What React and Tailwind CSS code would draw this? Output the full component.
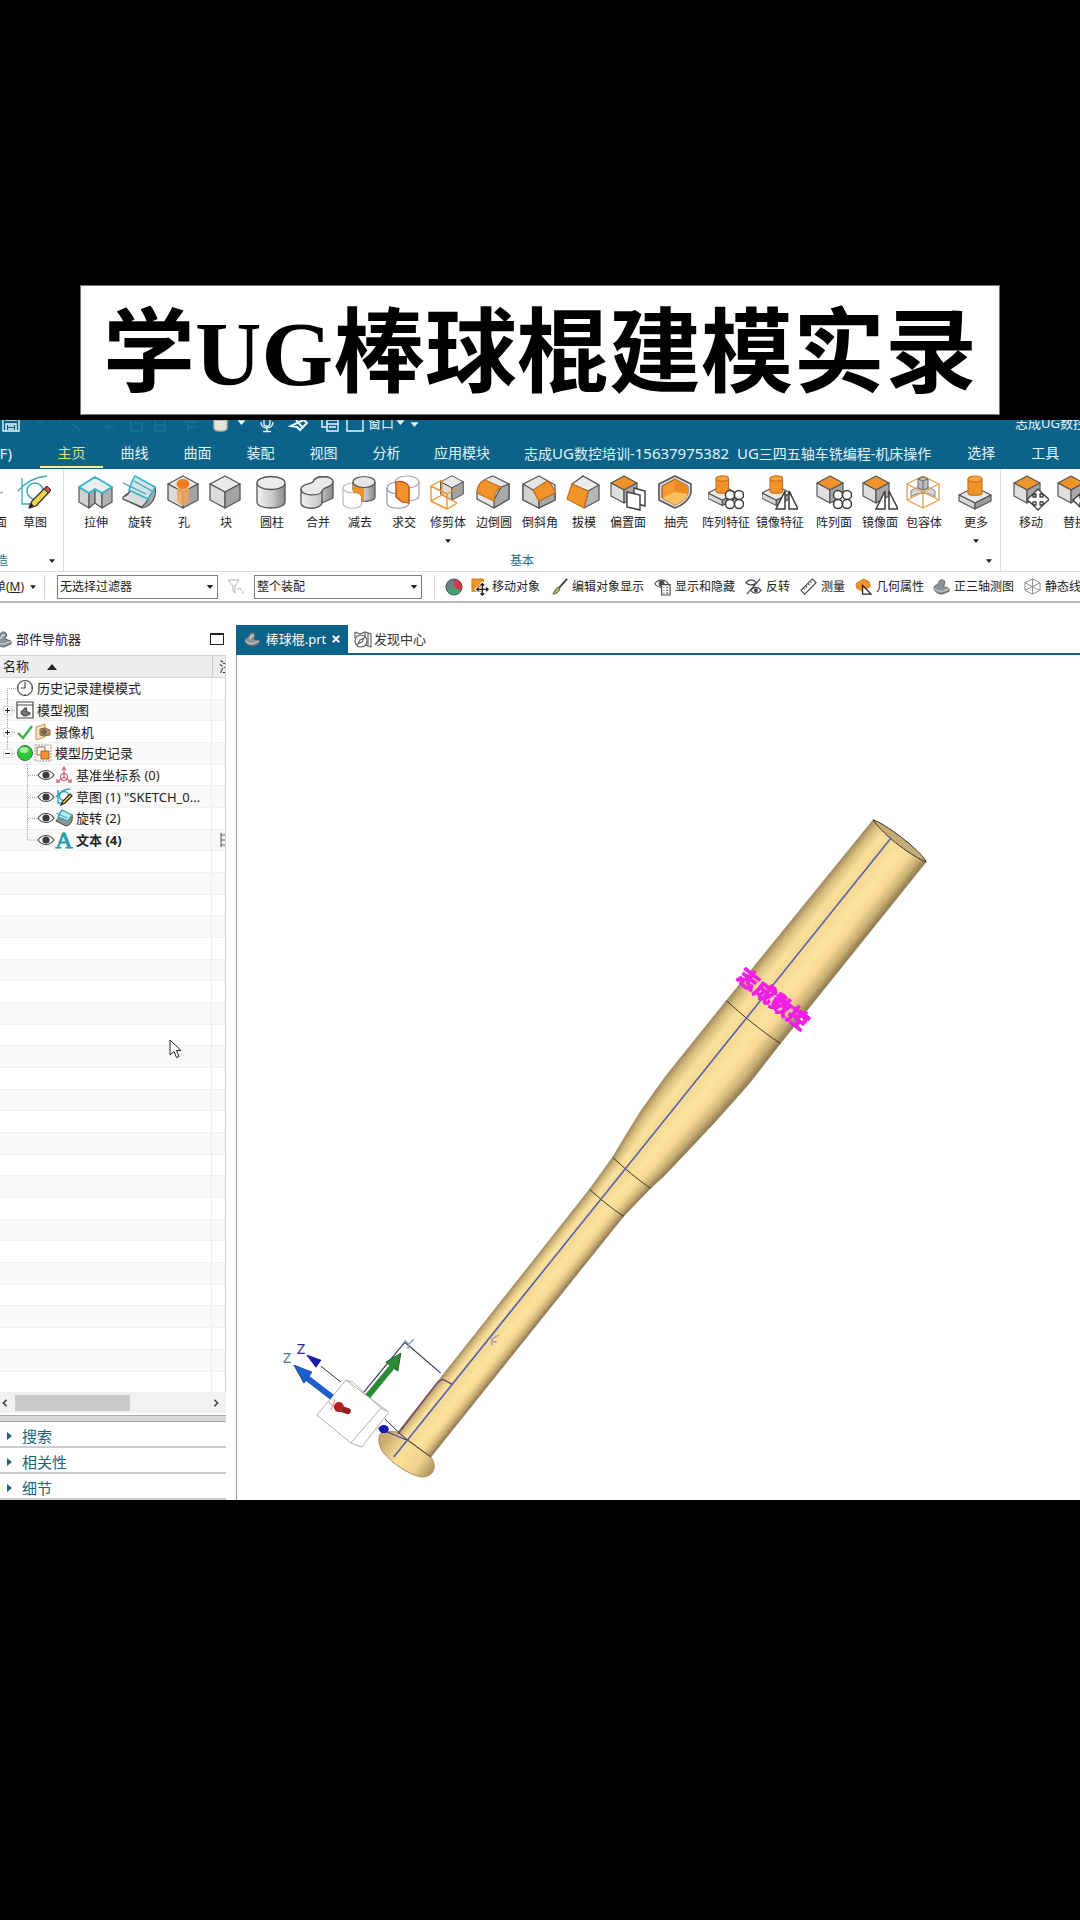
import React from "react";

const ORANGE = "#f0932b";
const EDGE = "#555555";

/* ---------- solid bodies used by the ribbon icons (34 x 34) ---------- */

const Cube = ({ top = "#e9e9e9", left = "#dcdcdc", right = "#a3a3a3", stroke = EDGE }) => (
  <g stroke={stroke} strokeWidth="1.3" strokeLinejoin="round">
    <path d="M17 1 32 9 17 17 2 9Z" fill={top} />
    <path d="M2 9 17 17V33L2 25Z" fill={left} />
    <path d="M32 9 17 17V33L32 25Z" fill={right} />
  </g>
);

const SmallCube = () => (
  <g stroke={EDGE} strokeWidth="1.2" strokeLinejoin="round">
    <path d="M14 1 27 8 14 15 1 8Z" fill={ORANGE} />
    <path d="M1 8 14 15V28L1 21Z" fill="#dedede" />
    <path d="M27 8 14 15V28L27 21Z" fill="#a8a8a8" />
  </g>
);

const Boss = () => (
  <g stroke={EDGE} strokeWidth="1.2" strokeLinejoin="round">
    <path d="M17 12 33 20 17 28 1 20Z" fill="#e8e8e8" />
    <path d="M1 20 17 28V34L1 26Z" fill="#d5d5d5" />
    <path d="M33 20 17 28V34L33 26Z" fill="#9c9c9c" />
    <path d="M10 4V18C10 21 24 21 24 18V4" fill={ORANGE} stroke="#c8701a" />
    <ellipse cx="17" cy="4" rx="7" ry="3" fill="#f7a440" stroke="#c8701a" />
  </g>
);

const FourCircles = () => (
  <g fill="#fff" stroke="#3c3c3c" strokeWidth="1.5">
    <circle cx="22" cy="20" r="4.5" />
    <circle cx="31" cy="20" r="4.5" />
    <circle cx="22" cy="29" r="4.5" />
    <circle cx="31" cy="29" r="4.5" />
  </g>
);

const MirrorMark = () => (
  <g fill="#fff" stroke="#3c3c3c" strokeWidth="1.5">
    <path d="M23 16V34H14Z" />
    <path d="M27 16V34H36Z" />
  </g>
);

const MoveMark = () => (
  <path
    d="M25 14 30 19H27V22H30V19L36 24.500 30 30V27H27V30H30L25 35 20 30H23V27H20V30L14 24.500 20 19V22H23V19H20Z"
    fill="#fff"
    stroke="#3c3c3c"
    strokeWidth="1.3"
    strokeLinejoin="round"
  />
);

const shapes = {
  sketch: (
    <g fill="none" strokeLinejoin="round">
      <path d="M1 16C8 8 18 2 30 1M5 3V29H16" stroke="#3aa6b4" strokeWidth="1.3" />
      <circle cx="18" cy="16" r="8" stroke="#3aa6b4" strokeWidth="1.5" />
      <path d="M12 33 15 26 29 12 33 16 19 31Z" fill="#f2d24b" stroke="#333" strokeWidth="1.3" />
      <path d="M27 14 30 11 34 15 31 18Z" fill="#c94a4a" stroke="#333" />
      <path d="M12 33 14 28 17 31Z" fill="#222" />
    </g>
  ),
  extrude: (
    <g strokeLinejoin="round" stroke={EDGE} strokeWidth="1.2">
      <path d="M1 12 11 18V33L1 27Z" fill="#d2d2d2" />
      <path d="M11 18 17 14V28L11 33Z" fill="#a8a8a8" />
      <path d="M17 14 24 18V33L17 28Z" fill="#d8d8d8" />
      <path d="M24 18 34 12V27L24 33Z" fill="#b0b0b0" />
      <path d="M17 2 34 12 24 18 17 14 11 18 1 12Z" fill="#e6eeee" stroke="#35b5c9" strokeWidth="1.8" />
    </g>
  ),
  revolve: (
    <g strokeLinejoin="round" stroke={EDGE} strokeWidth="1.2">
      <path d="M20 33 1 24C1 20 5 20 7 17L27 22 33 12C35 22 30 31 20 33Z" fill="#a6a9aa" />
      <path d="M1 22C6 21 7 18 8 15L26 24C25 28 22 29 20 32L1 24Z" fill="#d9dcdc" />
      <path d="M13 1 33 12C31 17 28 20 26 24L7 15C9 10 10 5 13 1Z" fill="#cfe3e8" stroke="#35b5c9" strokeWidth="1.6" />
      <path d="M1 8 24 19M12 6 30 16" fill="none" stroke="#3a9fb8" />
    </g>
  ),
  hole: (
    <g>
      <Cube />
      <path d="M11 13V27L17 31 23 27V13Z" fill="#f2a65a" opacity=".85" />
      <ellipse cx="17" cy="9" rx="6.500" ry="5" fill="#f07c1c" />
    </g>
  ),
  block: <Cube />,
  cylinder: (
    <g stroke={EDGE} strokeWidth="1.3">
      <path d="M3 8V27C3 35 31 35 31 27V8" fill="url(#steel)" />
      <ellipse cx="17" cy="8" rx="14" ry="6.500" fill="#ececec" />
    </g>
  ),
  unite: (
    <g stroke={EDGE} strokeWidth="1.3" strokeLinejoin="round">
      <path d="M1 14V28C1 35 21 35 22 28L33 23V7C31 0 15 0 13 7Z" fill="url(#steel)" />
      <path d="M13 7C15 0 33 0 33 7 33 12 23 12 22 16 20 22 1 21 1 14 1 9 11 9 13 7Z" fill="#e9e9e9" />
      <path d="M22 16V28" fill="none" />
    </g>
  ),
  subtract: (
    <g strokeWidth="1.2">
      <path d="M1 14V28C1 35 20 35 20 28V14" fill="#fff" stroke="#b8b8b8" />
      <ellipse cx="11" cy="13" rx="10" ry="5" fill="#fff" stroke="#b8b8b8" />
      <path d="M11 7V15C18 15 20 19 20 26 27 27 33 25 33 22V7" fill="url(#steel)" stroke={EDGE} />
      <path d="M11 8C11 12 18 13 22 13V26H20C20 20 17 18 11 18Z" fill={ORANGE} />
      <ellipse cx="22" cy="7" rx="11" ry="5.500" fill="#e6e6e6" stroke={EDGE} />
    </g>
  ),
  intersect: (
    <g fill="none" strokeWidth="1.2">
      <path d="M1 13V28C1 35 23 35 23 28V13" stroke="#8f98b8" />
      <ellipse cx="12" cy="13" rx="11" ry="6" stroke="#8f98b8" />
      <path d="M10 7V21C12 28 33 27 33 21V7" stroke="#aaaaaa" />
      <ellipse cx="21" cy="7" rx="12" ry="6" stroke="#aaaaaa" />
      <path d="M10 7C17 5 23 9 23 13V28L16 27 10 22Z" fill={ORANGE} stroke="#c2461a" />
    </g>
  ),
  trim: (
    <g fill="none" strokeLinejoin="round">
      <g transform="translate(9 0) scale(.76)"><Cube /></g>
      <path d="M1 11 17 19 17 34 1 26ZM1 11 12 5M17 19 27 13M17 34 27 28M1 26 12 20 27 28M12 20V5" stroke={ORANGE} strokeWidth="1.4" />
    </g>
  ),
  edgeBlend: (
    <g stroke={EDGE} strokeWidth="1.3" strokeLinejoin="round">
      <path d="M17 1 33 9V24L18 33 1 24V17C2 8 8 4 17 1Z" fill="#e6e6e6" />
      <path d="M18 33V25L25 12 33 9V24Z" fill="#a8a8a8" />
      <path d="M9 5 25 12C20 15 18 20 18 26L1 18C1 12 4 7 9 5Z" fill={ORANGE} stroke="#c8701a" />
    </g>
  ),
  chamfer: (
    <g stroke={EDGE} strokeWidth="1.3" strokeLinejoin="round">
      <path d="M17 1 33 10V25L17 33 1 25V9Z" fill="#e6e6e6" />
      <path d="M1 9 11 15 17 25V33L1 25Z" fill="#d2d2d2" />
      <path d="M17 26 33 18V25L17 33Z" fill="#a8a8a8" />
      <path d="M11 15 25 6C30 9 32 14 33 18L17 26Z" fill={ORANGE} stroke="#c8701a" />
    </g>
  ),
  draft: (
    <g stroke={EDGE} strokeWidth="1.3" strokeLinejoin="round">
      <path d="M17 1 33 10V25L18 33 22 17 7 10Z" fill="#b5b5b5" />
      <path d="M17 1 33 10 22 16 6 9Z" fill="#ececec" />
      <path d="M6 9 22 16 18 33 1 24Z" fill={ORANGE} stroke="#c8701a" />
    </g>
  ),
  offset: (
    <g>
      <SmallCube />
      <g fill="#fff" stroke="#3c3c3c" strokeWidth="1.4">
        <path d="M24 13 35 16V31L24 28Z" />
        <path d="M17 17 30 20V35L17 32Z" />
      </g>
    </g>
  ),
  shell: (
    <g strokeLinejoin="round">
      <path d="M17 1 33 9V18C31 25 25 30 17 33L1 25V9Z" fill="#dfe0e0" stroke={EDGE} strokeWidth="1.6" />
      <path d="M17 4 30 11V18C29 23 24 27 17 30L4 23V11Z" fill="#f59a35" stroke="#8c4c12" />
      <path d="M17 4V17L30 20V11Z" fill="#ee8a22" />
      <path d="M17 17 4 23 17 30C22 28 28 24 30 19Z" fill="#fbc15e" />
    </g>
  ),
  patternFeature: (<g><g transform="translate(-1 0) scale(.9)"><Boss /></g><FourCircles /></g>),
  mirrorFeature: (<g><g transform="translate(-1 0) scale(.9)"><Boss /></g><MirrorMark /></g>),
  patternFace: (<g><SmallCube /><FourCircles /></g>),
  mirrorFace: (<g><SmallCube /><MirrorMark /></g>),
  bounding: (
    <g fill="none" strokeLinejoin="round">
      <path d="M5 16C9 11 25 11 29 16V22C25 17 9 17 5 22Z" fill="#d5d5d5" stroke="#888" />
      <path d="M17 1 33 9 33 25 17 33 1 25V9ZM1 9 17 17 33 9M17 17V33M1 25 17 17 33 25" stroke="#e0a04a" strokeWidth="1.3" />
      <path d="M12 4 17 2 22 4V13L17 15 12 13Z" fill="#bdbdbd" stroke="#666" />
      <path d="M12 4 17 6 22 4M17 6V15" stroke="#666" />
    </g>
  ),
  more: <Boss />,
  move: (<g><SmallCube /><MoveMark /></g>),
  replace: (
    <g>
      <SmallCube />
      <path d="M16 25 23 19V23H34V28H23V32Z" fill="#fff" stroke="#3c3c3c" strokeWidth="1.4" />
    </g>
  ),
};

const ribbonItems = [
  { label: "拉伸", icon: "extrude", width: "w-11" },
  { label: "旋转", icon: "revolve", width: "w-11" },
  { label: "孔", icon: "hole", width: "w-11" },
  { label: "块", icon: "block", width: "w-10" },
  { label: "圆柱", icon: "cylinder", width: "w-13" },
  { label: "合并", icon: "unite", width: "w-10" },
  { label: "减去", icon: "subtract", width: "w-11" },
  { label: "求交", icon: "intersect", width: "w-11" },
  { label: "修剪体", icon: "trim", width: "w-11", menu: true },
  { label: "边倒圆", icon: "edgeBlend", width: "w-12" },
  { label: "倒斜角", icon: "chamfer", width: "w-11" },
  { label: "拔模", icon: "draft", width: "w-11" },
  { label: "偏置面", icon: "offset", width: "w-11" },
  { label: "抽壳", icon: "shell", width: "w-13" },
  { label: "阵列特征", icon: "patternFeature", width: "w-12" },
  { label: "镜像特征", icon: "mirrorFeature", width: "w-15" },
  { label: "阵列面", icon: "patternFace", width: "w-12" },
  { label: "镜像面", icon: "mirrorFace", width: "w-11" },
  { label: "包容体", icon: "bounding", width: "w-11" },
  { label: "更多", icon: "more", width: "w-15", menu: true },
];

const Caret = ({ className = "" }) => (
  <svg viewBox="0 0 8 5" className={`h-1 w-1.5 shrink-0 ${className}`} fill="currentColor">
    <path d="M0 0H8L4 5Z" />
  </svg>
);

const RibbonButton = ({ label, icon, width, menu }) => (
  <button type="button" className={`flex shrink-0 flex-col items-center pt-1.5 ${width}`}>
    <svg viewBox="0 0 36 36" className="h-9 w-9">{shapes[icon]}</svg>
    <span className="mt-1 text-xs leading-4 whitespace-nowrap">{label}</span>
    {menu && <Caret className="mt-2" />}
  </button>
);

/* ---------- window title and menu tabs ---------- */

const QuickAccess = () => (
  <div className="flex h-[17px] items-start overflow-hidden text-[#e8f6fb]">
    <svg viewBox="0 0 430 17" className="h-[17px] w-[430px] shrink-0" fill="none" stroke="currentColor" strokeWidth="1.4">
      <path d="M3 0V11H19V0M6 11V4H16V11M8 6H14M8 9H14M5 0H17" />
      <g stroke="#2b7fa0" opacity=".6">
        <path d="M38 4 44 0M60 0V3M72 3 80 11M108 3V10M104 7H114M131 0V11H142V3H134M155 0V11H165V0M155 5H165M183 2H198M188 2V11M188 7H198" />
      </g>
      <path d="M214 0V8C214 12 227 12 227 8V0Z" fill="#e6e2dc" stroke="#b9b4ab" />
      <path d="M239 1H244L241.500 4Z" fill="currentColor" />
      <path d="M264 0V4C264 7 270 7 270 4V0M261 2C261 10 273 10 273 2M267 8V11M263 11.500H271" />
      <path d="M291 6 299 2 304 0 307 3 300 10 297 7ZM296 0 303 8" strokeWidth="2" />
      <path d="M322 0V7H327M327 0H338V11H327ZM327 4H338M329 7H336" />
      <path d="M347 0V11H363V0" />
      <path d="M398 1H403L400.500 4ZM412 3H417L414.500 6Z" fill="currentColor" />
    </svg>
    <span className="relative right-[62px] -mt-[7px] text-[13px] leading-5">窗口</span>
    <span className="-mt-[7px] -mr-8 ml-auto text-[13px] leading-5 whitespace-nowrap">志成UG数控培训</span>
  </div>
);

const tabs = ["曲线", "曲面", "装配", "视图", "分析"];

const MenuTabs = () => (
  <nav className="flex h-8 overflow-hidden text-sm leading-8 whitespace-nowrap text-[#e4f4fa]">
    <button type="button" className="flex w-10 shrink-0 justify-end pr-7">
      文件<span className="text-[15px]">(F)</span>
    </button>
    <button type="button" className="flex w-[63px] shrink-0 flex-col items-center text-[#dde08a]">
      <span className="h-[29px]">主页</span>
      <span className="h-0.5 w-full bg-[#e9efa5]" />
    </button>
    {tabs.map((tab) => (
      <button type="button" key={tab} className="w-[63px] shrink-0 text-center">{tab}</button>
    ))}
    <button type="button" className="shrink-0 px-4">应用模块</button>
    <button type="button" className="shrink-0 px-[18px]">
      志成<span className="text-[15px]">UG</span>数控培训
      <span className="text-[15px]">-15637975382{"\u00a0 "}UG</span>
      三四五轴车铣编程-机床操作
    </button>
    <button type="button" className="shrink-0 px-[18px]">选择</button>
    <button type="button" className="shrink-0 px-[18px]">工具</button>
  </nav>
);

const Ribbon = () => (
  <div className="flex h-[103px] overflow-hidden border-b border-[#dcdcdc] bg-white text-[#222]">
    <section className="flex w-16 shrink-0 flex-col border-r border-[#dcdcdc]">
      <div className="flex justify-end pr-1.5">
        <button type="button" className="flex w-11 shrink-0 flex-col items-center pt-1.5">
          <svg viewBox="0 0 36 36" className="h-9 w-9" fill="none" stroke="#8a8a8a"><path d="M6 26 30 17" /></svg>
          <span className="mt-1 pr-1 text-xs leading-4 whitespace-nowrap">基准面</span>
        </button>
        <RibbonButton label="草图" icon="sketch" width="w-11" />
      </div>
      <div className="mt-auto mb-0.5 flex items-center justify-between pr-2">
        <span className="flex w-2 justify-end text-xs leading-4 whitespace-nowrap text-[#1d7a78]">构造</span>
        <Caret />
      </div>
    </section>
    <section className="flex w-[937px] shrink-0 flex-col border-r border-[#dcdcdc] pl-2.5">
      <div className="flex">
        {ribbonItems.map((item) => <RibbonButton key={item.label} {...item} />)}
      </div>
      <div className="mt-auto mb-0.5 flex items-center pr-2">
        <span className="flex-[20]" />
        <span className="shrink-0 text-xs leading-4 whitespace-nowrap text-[#1f6f8f]">基本</span>
        <span className="flex flex-[21] justify-end"><Caret /></span>
      </div>
    </section>
    <section className="flex shrink-0 pl-2">
      <RibbonButton label="移动" icon="move" width="w-11" />
      <RibbonButton label="替换" icon="replace" width="w-11" />
    </section>
  </div>
);

/* ---------- selection bar ---------- */

const FilterSelect = ({ label, value, width }) => (
  <label className={`relative block shrink-0 ${width}`}>
    <span className="sr-only">{label}</span>
    <select className="block h-6 w-full appearance-none border border-[#7d7d7d] bg-white pr-5 pl-0.5 text-xs text-[#222]">
      <option>{value}</option>
    </select>
    <Caret className="absolute top-2.5 right-1 w-2" />
  </label>
);

const PartGlyph = ({ className = "h-4 w-4" }) => (
  <svg viewBox="0 0 18 18" className={`shrink-0 ${className}`}>
    <path d="M1 10C2 7 5 8 6 5 6 2 10 1 12 3 13 5 12 7 11 9L17 11V14L10 17C5 17 1 14 1 10Z" fill="#8e9397" stroke="#5b5f62" />
    <path d="M1 11C4 14 8 14 10 14L17 11" fill="none" stroke="#d7dadc" />
    <path d="M7 9C7 6 9 5 11 5" fill="none" stroke="#d7dadc" strokeWidth="1.500" />
  </svg>
);

const tools = [
  {
    label: "移动对象",
    box: "w-20",
    icon: (
      <g>
        <path d="M1 1H13V14H1Z" fill={ORANGE} stroke="#c87a22" />
        <path d="M12 6V18M6 12H18M10 8 12 6 14 8M10 16 12 18 14 16M8 10 6 12 8 14M16 10 18 12 16 14" stroke="#fff" strokeWidth="3.500" fill="none" />
        <path d="M12 6V18M6 12H18M10 8 12 6 14 8M10 16 12 18 14 16M8 10 6 12 8 14M16 10 18 12 16 14" stroke="#222" strokeWidth="1.400" fill="none" />
      </g>
    ),
  },
  {
    label: "编辑对象显示",
    box: "w-[103px]",
    icon: (
      <g>
        <path d="M17 1 8 11" stroke="#444" strokeWidth="2" />
        <path d="M9 10C7 9 4 12 2 17 6 17 10 14 9 10Z" fill="#a9ad6a" stroke="#5d6140" />
      </g>
    ),
  },
  {
    label: "显示和隐藏",
    box: "w-[91px]",
    icon: (
      <g fill="none" stroke="#4a4a4a" strokeWidth="1.200">
        <path d="M1 6C4 1 12 1 15 6 12 11 4 11 1 6Z" />
        <circle cx="8" cy="6" r="2.500" fill="#4a4a4a" />
        <path d="M8 7H17V18H8Z" fill="#fff" />
        <path d="M10 10H11M13 10H15M10 13H11M13 13H15M10 16H11M13 16H15" />
      </g>
    ),
  },
  {
    label: "反转",
    box: "w-[55px]",
    icon: (
      <g fill="none" stroke="#4a4a4a" strokeWidth="1.300">
        <path d="M1 5C4 1 9 1 12 5 9 8 4 8 1 5ZM6 13C9 9 14 9 17 13 14 17 9 17 6 13ZM16 1 2 17" />
        <circle cx="11.500" cy="13" r="1.500" fill="#4a4a4a" />
      </g>
    ),
  },
  {
    label: "测量",
    box: "w-[55px]",
    icon: (
      <g fill="none" stroke="#4a4a4a" strokeWidth="1.200">
        <path d="M13 1 17 5 5 17 1 13ZM11 4 12 5M8.500 6 10 7.500M6 8.500 7.500 10M4 11 5 12" />
      </g>
    ),
  },
  {
    label: "几何属性",
    box: "w-[78px]",
    icon: (
      <g>
        <path d="M1 6 9 1 15 4 16 9 8 14 2 11Z" fill={ORANGE} stroke="#c87a22" />
        <path d="M8 8V17H17Z" fill="#fff" stroke="#222" strokeWidth="1.300" />
      </g>
    ),
  },
  {
    label: "正三轴测图",
    box: "w-[91px]",
    icon: (
      <g>
        <path d="M1 10C2 7 5 8 6 5 6 2 10 1 12 3 13 5 12 7 11 9L17 11V14L10 17C5 17 1 14 1 10Z" fill="#8e9397" stroke="#5b5f62" />
        <path d="M1 11C4 14 8 14 10 14L17 11" fill="none" stroke="#d7dadc" />
      </g>
    ),
  },
  {
    label: "静态线框",
    box: "w-[78px]",
    icon: (
      <path d="M9 1 17 5V13L9 17 1 13V5ZM1 5 9 9 17 5M9 9V17M1 13 9 9 17 13M9 1V9" fill="none" stroke="#8a8a8a" />
    ),
  },
];

const SelectionBar = () => (
  <div className="flex h-[31px] items-center overflow-hidden border-b-2 border-[#b9b9b9] bg-white text-xs whitespace-nowrap text-[#222]">
    <button type="button" className="mr-2 flex w-9 shrink-0 items-center justify-end gap-1.5">
      <span>菜单(<u>M</u>)</span>
      <Caret />
    </button>
    <span className="mr-3 h-6 w-px shrink-0 bg-[#d5d5d5]" />
    <FilterSelect label="选择过滤器" value="无选择过滤器" width="w-[161px]" />
    <svg viewBox="0 0 18 18" className="mx-[9px] h-[18px] w-[18px] shrink-0" fill="none" stroke="#b5b5b5">
      <path d="M1 2H12L8 8V15L6 13V8ZM11 12C11 9 15 10 14 13M15 16 17 13" />
    </svg>
    <FilterSelect label="选择范围" value="整个装配" width="w-[168px]" />
    <span className="mr-2.5 ml-3 h-6 w-px shrink-0 bg-[#d5d5d5]" />
    <svg viewBox="0 0 18 18" className="mr-2 h-[18px] w-[18px] shrink-0">
      <circle cx="9" cy="9" r="8" fill="#3fa66b" />
      <path d="M9 9V1A8 8 0 0 1 16 13Z" fill="#dd3345" />
      <path d="M9 9V1A8 8 0 0 0 2 13Z" fill="#6d7f86" />
      <circle cx="9" cy="9" r="8" fill="none" stroke="#555" />
    </svg>
    {tools.map((tool) => (
      <button type="button" key={tool.label} className={`flex shrink-0 items-center gap-[3px] ${tool.box}`}>
        <svg viewBox="0 0 19 19" className="h-[18px] w-[18px] shrink-0">{tool.icon}</svg>
        {tool.label}
      </button>
    ))}
  </div>
);

/* ---------- part navigator ---------- */

const Eye = () => (
  <g>
    <path d="M1 9C5 3 13 3 17 9 13 15 5 15 1 9Z" fill="#fff" stroke="#4a4a4a" strokeWidth="1.200" />
    <circle cx="9" cy="9" r="3.600" fill="#3b3b3b" />
  </g>
);

const treeIcons = {
  clock: (
    <g fill="#fff" stroke="#4a4a4a" strokeWidth="1.200">
      <circle cx="9" cy="9" r="7.500" />
      <path d="M9 3V9H5M9 15V16M15 9H16M2 9H3" fill="none" />
    </g>
  ),
  views: (
    <g fill="#fff" stroke="#4a4a4a" strokeWidth="1.200">
      <path d="M1 1H17V17H1ZM1 4H17" />
      <path d="M5 11C6 9 8 10 8 8 9 6 12 7 10 10L14 12V13L10 15C7 15 5 13 5 11Z" fill="#777" />
    </g>
  ),
  check: <path d="M2 10 7 15 16 3" fill="none" stroke="#37b34a" strokeWidth="2.400" />,
  camera: (
    <g stroke="#8a6a3a">
      <path d="M2 4 11 1V14L2 17Z" fill="#f5e3c5" stroke="#d08f3a" />
      <path d="M6 6 11 5 16 7V12L10 13 6 12Z" fill="#b3936a" />
      <circle cx="10" cy="9" r="2.500" fill="#666" />
    </g>
  ),
  ball: (
    <g>
      <circle cx="9" cy="9" r="7.500" fill="#2fc83b" stroke="#2a7a30" />
      <ellipse cx="8" cy="6" rx="4.500" ry="3" fill="#a8f0a6" />
    </g>
  ),
  history: (
    <g>
      <path d="M1 1H17V17H1Z" fill="none" stroke="#9a9a9a" strokeDasharray="2 1" />
      <path d="M3 3H11V11H3Z" fill="#fff" stroke="#a3672a" />
      <path d="M7 7H15V15H7Z" fill={ORANGE} stroke="#a3672a" />
    </g>
  ),
  eye: <Eye />,
  csys: (
    <g fill="none" stroke="#cf6a80" strokeWidth="1.300">
      <path d="M9 11V2M7 4 9 1 11 4M9 11 2 16M9 11 16 16M2 13V16H5M13 16H16V13" />
      <circle cx="9" cy="11" r="3.500" />
    </g>
  ),
  sketch: (
    <g fill="none">
      <path d="M1 9C4 5 9 1 15 1M3 2V15H8" stroke="#2fa9b8" strokeWidth="1.400" />
      <circle cx="9" cy="8" r="4.500" stroke="#2fa9b8" strokeWidth="1.500" />
      <path d="M6 17 8 13 15 6 17 8 10 15Z" fill="#f2d24b" stroke="#222" strokeWidth="1.200" />
    </g>
  ),
  revolve: (
    <g strokeLinejoin="round">
      <path d="M11 17 1 12C2 10 3 10 4 8L14 11 17 6C18 12 16 16 11 17Z" fill="#8f9496" stroke="#444" />
      <path d="M7 1 17 6C16 9 14 10 13 12L3 8C4 5 5 3 7 1Z" fill="#bfe3ea" stroke="#2f9fb2" strokeWidth="1.300" />
      <path d="M1 4 12 9" stroke="#2f9fb2" />
    </g>
  ),
  text: (
    <text x="9" y="17" textAnchor="middle" fontSize="24" fontFamily="Liberation Serif, serif" fill="#1f9ea8" stroke="#1f9ea8">A</text>
  ),
};

const treeRows = [
  { label: "历史记录建模模式", icons: ["clock"], first: true },
  { label: "模型视图", icons: ["views"], mark: "+" },
  { label: "摄像机", icons: ["check", "camera"], mark: "+" },
  { label: "模型历史记录", icons: ["ball", "history"], mark: "−", last: true },
  { label: "基准坐标系 (0)", icons: ["eye", "csys"], child: true },
  { label: "草图 (1) \"SKETCH_0...", icons: ["eye", "sketch"], child: true },
  { label: "旋转 (2)", icons: ["eye", "revolve"], child: true },
  { label: "文本 (4)", icons: ["eye", "text"], child: true, bold: true, last: true },
];

const ROW_COUNT = 33;

const Branch = ({ row }) =>
  row.child ? (
    <svg viewBox="0 0 37 22" className="h-[22px] w-[37px] shrink-0" fill="none" stroke="#a5a5a5" strokeDasharray="1 1">
      <path d={row.last ? "M27.500 0V11H37" : "M27.500 0V22M28 11.500H37"} />
    </svg>
  ) : (
    <svg viewBox="0 0 16 22" className="h-[22px] w-4 shrink-0" fill="none">
      <path
        d={row.first ? "M7.500 22V11.500H16" : row.last ? "M7.500 0V11.500H16" : "M7.500 0V22M8 11.500H16"}
        stroke="#a5a5a5"
        strokeDasharray="1 1"
      />
      {row.mark && <path d="M3.500 7.500H11.500V15.500H3.500Z" fill="#fff" stroke="#e2e2e2" />}
      {row.mark && <path d={row.mark === "+" ? "M5 11.500H10M7.500 9V14" : "M5 11.500H10"} stroke="#222" />}
    </svg>
  );

const PartNavigator = () => (
  <aside className="flex w-[226px] shrink-0 flex-col text-[13px] text-[#222]">
    <header className="flex h-[52px] shrink-0 items-end pr-0.5 pb-1">
      <div className="flex w-full items-center">
        <PartGlyph className="mr-1 -ml-1.5 h-[18px] w-[18px]" />
        <h2 className="leading-6">部件导航器</h2>
        <button type="button" aria-label="最大化" className="ml-auto h-3 w-3.5 border border-t-2 border-[#222]" />
      </div>
    </header>
    <div className="flex h-[23px] shrink-0 items-center overflow-hidden border-y border-r border-[#d5d5d5] bg-[#eeeeee]">
      <button type="button" className="flex h-full flex-1 items-center gap-[18px] border-r border-[#c8c8c8] pl-[3px]">
        名称
        <svg viewBox="0 0 10 6" className="h-1.5 w-2.5"><path d="M0 6 5 0 10 6Z" fill="#222" /></svg>
      </button>
      <span className="w-3 overflow-hidden pl-1.5">注</span>
    </div>
    <ul className="flex flex-1 flex-col border-r border-[#d0d0d0]">
      {Array.from({ length: ROW_COUNT }, (_, i) => {
        const row = treeRows[i];
        return (
          <li key={i} className="flex min-h-0 flex-1 items-center border-b border-[#f1f1f1] even:bg-[#f9f9f9]">
            <div className="flex h-full w-[212px] items-center border-r border-[#ececec]">
              {row && <Branch row={row} />}
              {row && row.icons.map((name) => (
                <svg key={name} viewBox="0 0 18 18" className="h-[18px] w-[18px] shrink-0">{treeIcons[name]}</svg>
              ))}
              {row && (
                <span className={`pl-[3px] leading-5 whitespace-nowrap ${row.bold ? "font-bold" : ""}`}>{row.label}</span>
              )}
            </div>
            {row && row.bold && (
              <svg viewBox="0 0 5 14" className="ml-auto h-3.5 w-[5px]" fill="none" stroke="#555"><path d="M1 0V14M1 2H5M1 7H5M1 12H5" /></svg>
            )}
          </li>
        );
      })}
    </ul>
    <div className="flex h-5 shrink-0 items-center bg-[#f1f1f1] text-[#444]">
      <button type="button" aria-label="向左滚动" className="flex w-[15px] pl-0.5">
        <svg viewBox="0 0 6 10" className="h-2 w-1.5" fill="none" stroke="currentColor" strokeWidth="2"><path d="M5 1 1 5 5 9" /></svg>
      </button>
      <span className="h-4 w-[115px] bg-[#cacaca]" />
      <button type="button" aria-label="向右滚动" className="ml-auto flex w-5 justify-center">
        <svg viewBox="0 0 6 10" className="h-2 w-1.5" fill="none" stroke="currentColor" strokeWidth="2"><path d="M1 1 5 5 1 9" /></svg>
      </button>
    </div>
    <div className="mt-0.5 h-[7px] shrink-0 border-y border-[#ababab] bg-[#d9d9d9]" />
    {["搜索", "相关性", "细节"].map((name) => (
      <button
        type="button"
        key={name}
        className="flex h-[26px] shrink-0 items-center gap-2.5 border-b-2 border-[#cccccc] pt-1 pl-[7px] text-[15px] leading-5 text-[#1c6479]"
      >
        <svg viewBox="0 0 5 8" className="h-2 w-[5px]"><path d="M0 0 5 4 0 8Z" fill="currentColor" /></svg>
        {name}
      </button>
    ))}
  </aside>
);

/* ---------- graphics window ---------- */

// silhouette of the bat, from the barrel end down to the knob: [left, right]
const profile = [
  [[873, 819], [926, 861]],
  [[726, 1000], [780, 1043]],
  [[693, 1041], [748, 1084]],
  [[665, 1076], [715, 1121]],
  [[640, 1111], [684, 1154]],
  [[624, 1137], [665, 1174]],
  [[612, 1157], [650, 1188]],
  [[589, 1189], [623, 1216]],
  [[397, 1432], [430, 1457]],
];

// tone across the body, dark at both rims and bright in the middle
const tones = [
  [0, [158, 135, 90]],
  [0.1, [214, 186, 124]],
  [0.24, [251, 224, 154]],
  [0.4, [245, 216, 146]],
  [0.6, [253, 226, 156]],
  [0.75, [246, 217, 147]],
  [0.9, [200, 172, 114]],
  [1, [140, 120, 80]],
];

const toneAt = (t) => {
  const i = Math.max(1, tones.findIndex(([stop]) => stop >= t));
  const [a, from] = tones[i - 1];
  const [b, to] = tones[i];
  const k = (t - a) / (b - a);
  return `rgb(${from.map((c, n) => Math.round(c + (to[n] - c) * k)).join(",")})`;
};

const pointAt = ([l, r], t) => `${l[0] + (r[0] - l[0]) * t},${l[1] + (r[1] - l[1]) * t}`;

const STRIPS = 28;

const Bat = () => (
  <g>
    {Array.from({ length: STRIPS }, (_, i) => {
      const a = i / STRIPS;
      const b = (i + 1) / STRIPS;
      const points = [...profile.map((p) => pointAt(p, a)), ...[...profile].reverse().map((p) => pointAt(p, b))];
      const tone = toneAt((a + b) / 2);
      return <polygon key={i} points={points.join(" ")} fill={tone} stroke={tone} strokeWidth=".8" />;
    })}
    <path d="M873 819C885 823 920 849 926 861 914 857 884 836 873 819Z" fill="#c4ab77" stroke="#3c3525" />
    <path d="M726 1000C741 1014 762 1031 780 1043M612 1157C624 1168 637 1179 650 1188M589 1189C600 1199 611 1208 623 1216" fill="none" stroke="#3c3525" />
    <path d="M384 1431 397 1432 430 1457C437 1466 433 1477 421 1477 408 1475 391 1463 382 1452 376 1443 377 1432 384 1431Z" fill="url(#knob)" stroke="#a58b5a" />
    <path d="M405 1439 430 1457" stroke="#3c3525" />
    <path d="M891 837 393 1457" stroke="#5560b0" strokeWidth="1.600" />
    <path d="M397 1434 437 1382 442 1379 451 1384" fill="none" stroke="#6b3f6b" strokeWidth="1.300" />
    <path d="M491 1345V1339L498 1335M491 1341 496 1342" fill="none" stroke="#a5a0ac" strokeWidth="1.500" />
    <text
      x="773"
      y="998"
      transform="rotate(38 773 998)"
      textAnchor="middle"
      dominantBaseline="central"
      fontSize="21"
      fontWeight="bold"
      fill="#f01ee6"
      stroke="#f01ee6"
      strokeWidth="1.300"
    >
      志成数控
    </text>
  </g>
);

const Triad = () => (
  <g fill="none" strokeLinejoin="round">
    <path d="M345 1380 388 1412 361 1447 350 1443 316 1415ZM345 1380 352 1382 380 1408 350 1443M380 1408 388 1412" fill="#fff" stroke="#b0b0b0" />
    <path d="M320 1366 340 1382" stroke="#333" />
    <path d="M306 1355 320 1360 315 1367Z" fill="#1919a8" stroke="#1919a8" />
    <path d="M331 1397 305 1377" stroke="#1d5fc9" strokeWidth="6" />
    <path d="M293 1365 311 1372 303 1383Z" fill="#1d5fc9" stroke="#1848a0" />
    <path d="M363 1392 404 1342 440 1373" stroke="#3a3f66" strokeWidth="1.200" />
    <path d="M367 1396 391 1367" stroke="#2b8a35" strokeWidth="6" />
    <path d="M400 1353 397 1371 385 1362Z" fill="#2b8a35" stroke="#1e6a28" />
    <path d="M404 1340 408 1344 413 1339M408 1344 407 1349" stroke="#8fa3a8" strokeWidth="1.400" />
    <path d="M328 1402 333 1407M334 1400 330 1410" stroke="#d98080" />
    <path d="M338 1408 347 1411" stroke="#8f1d1d" strokeWidth="6" strokeLinecap="round" />
    <circle cx="338" cy="1407" r="5" fill="#b02020" />
  </g>
);

// datum origin and axis letters, drawn over the knob
const Origin = () => (
  <g fill="none">
    <path d="M384 1419 406 1440 377 1428" stroke="#2a2f8a" />
    <ellipse cx="383" cy="1429" rx="5" ry="4" fill="#1717b5" />
    <text x="286" y="1363" textAnchor="middle" fontSize="15" fill="#4f7d92">Z</text>
    <text x="300" y="1354" textAnchor="middle" fontSize="15" fill="#2b2b8f">Z</text>
  </g>
);

const GraphicsWindow = () => (
  <main className="ml-2.5 flex min-w-0 flex-1 flex-col pt-[22px] text-[13px]">
    <div className="flex h-[30px] shrink-0 items-stretch border-b-2 border-[#0b6389]">
      <button type="button" className="flex w-[112px] items-center justify-between bg-[#0b6389] pr-2 pl-2 text-white">
        <PartGlyph />
        <span className="leading-5">棒球棍.prt</span>
        <svg viewBox="0 0 10 10" className="h-2 w-2" stroke="currentColor" strokeWidth="2.400"><path d="M1 1 9 9M9 1 1 9" /></svg>
      </button>
      <button type="button" className="flex items-center gap-0.5 pl-1.5 text-[#333]">
        <svg viewBox="0 0 18 18" className="h-[18px] w-[18px]" fill="none" stroke="#666" strokeWidth="1.200">
          <path d="M1 2 6 4 11 2 17 4V17L11 15M1 2V8M11 2V6M14 3V16" />
          <circle cx="7" cy="11" r="6" />
          <path d="M10 8 8 12 4 14 6 10Z" />
        </svg>
        <span className="leading-5">发现中心</span>
      </button>
    </div>
    <svg viewBox="236 654 844 846" className="block w-full border-l border-[#9a9a9a]">
      <defs>
        <linearGradient id="knob" x1="384" y1="1440" x2="432" y2="1474" gradientUnits="userSpaceOnUse">
          <stop offset="0" stopColor="#c9ab70" />
          <stop offset=".35" stopColor="#fbdf96" />
          <stop offset=".7" stopColor="#f0d48e" />
          <stop offset="1" stopColor="#a58b5a" />
        </linearGradient>
      </defs>
      <Triad />
      <Bat />
      <Origin />
    </svg>
  </main>
);

const App = () => (
  <div
    lang="zh-CN"
    className="min-h-screen overflow-hidden bg-black pt-[285px] font-['Noto_Sans','Noto_Sans_CJK_SC',sans-serif]"
  >
    <svg className="absolute h-0 w-0">
      <defs>
        <linearGradient id="steel">
          <stop offset="0" stopColor="#f1f1f1" />
          <stop offset=".5" stopColor="#cfcfcf" />
          <stop offset="1" stopColor="#8a8a8a" />
        </linearGradient>
      </defs>
    </svg>
    <h1 className="mx-20 mb-[5px] flex h-[130px] items-center justify-center border border-[#777] bg-white pt-2 font-['Liberation_Serif','Noto_Sans_CJK_SC',serif] text-[92px] leading-none font-bold whitespace-nowrap text-black">
      学UG棒球棍建模实录
    </h1>
    <div className="relative overflow-hidden bg-white">
      <div className="bg-[#0b6389]">
        <QuickAccess />
        <MenuTabs />
      </div>
      <Ribbon />
      <SelectionBar />
      <div className="flex">
        <PartNavigator />
        <GraphicsWindow />
      </div>
      <svg viewBox="0 0 12 20" className="absolute top-[619px] left-[169px] h-5 w-3">
        <path d="M1 1V16L5 12.500 7.500 18.500 10 17.500 7.500 11.500H12Z" fill="#fff" stroke="#222" />
      </svg>
    </div>
  </div>
);

export default App;
